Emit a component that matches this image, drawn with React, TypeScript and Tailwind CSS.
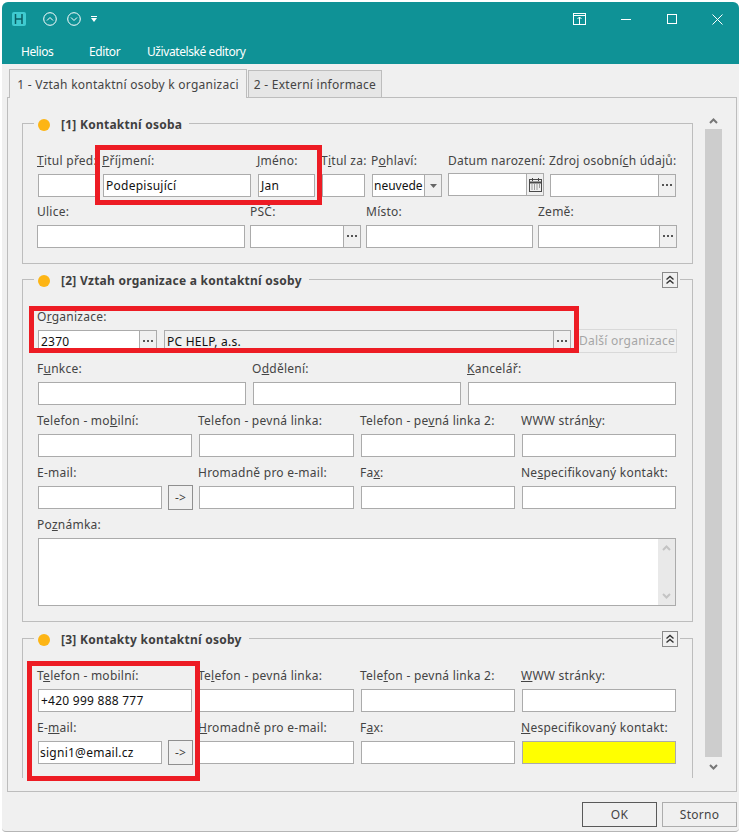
import type { ReactNode } from 'react';

function Dots() {
  return (
    <svg width="11" height="3" viewBox="0 0 11 3" className="fill-[#555555]">
      <rect x="0" y="0" width="2" height="2" />
      <rect x="4" y="0" width="2" height="2" />
      <rect x="8" y="0" width="2" height="2" />
    </svg>
  );
}

function Calendar() {
  return (
    <svg width="13" height="14" viewBox="0 0 13 14" fill="none" className="stroke-[#4a4a4a]">
      <rect x="0.5" y="1.5" width="12" height="12" />
      <path d="M0.5 4.5h12" strokeWidth="2" />
      <path d="M3.5 0v3M9.5 0v3" />
      <path d="M2.5 7h1M5 7h1M7.5 7h1M10 7h1M2.5 9h1M5 9h1M7.5 9h1M10 9h1M2.5 11h1M5 11h1M7.5 11h1" />
    </svg>
  );
}

function DoubleUp() {
  return (
    <svg width="10" height="10" viewBox="0 0 10 10" fill="none" strokeWidth="1.4" className="stroke-[#333333]">
      <path d="M1.5 4.5 5 1.5l3.5 3" />
      <path d="M1.5 8.5 5 5.5l3.5 3" />
    </svg>
  );
}

function Chevron({ down, color }: { down?: boolean; color: string }) {
  return (
    <svg width="9" height="6" viewBox="0 0 9 6" fill="none" strokeWidth="2" stroke={color}>
      <path d={down ? 'M1 1l3.5 3.5L8 1' : 'M1 5l3.5-3.5L8 5'} />
    </svg>
  );
}

function Input({ className = '', text, side, bg = 'bg-white', textClass = 'pl-[2px]' }: {
  className?: string;
  text?: string;
  side?: ReactNode;
  bg?: string;
  textClass?: string;
}) {
  return (
    <div className={`flex h-[23px] shrink-0 border border-[#ababab] ${bg} ${className}`}>
      <div className={`flex min-w-0 flex-1 items-center overflow-hidden whitespace-nowrap text-[#111111] ${textClass}`}>{text}</div>
      {side && (
        <div className="flex w-[17px] shrink-0 items-center justify-center border-l border-[#ababab] bg-[#f0f0f0]">
          {side}
        </div>
      )}
    </div>
  );
}

function Field({ w, label, flush, children }: { w: string; label: ReactNode; flush?: boolean; children?: ReactNode }) {
  return (
    <div className={`shrink-0 ${w}`}>
      <div className={`mb-[5px] mt-px h-[16px] whitespace-nowrap leading-[16px] text-[#444444] ${flush ? '' : '-ml-px'}`}>{label}</div>
      {children ?? <Input className="w-full" />}
    </div>
  );
}

function ArrowButton() {
  return (
    <div className="-mt-px flex h-[25px] w-[25px] shrink-0 items-center justify-center border border-[#8f8f8f] bg-[#f0f0f0] text-[#444444]">
      -&gt;
    </div>
  );
}

function Group({ title, height, className = '', open, collapse, children }: {
  title: string;
  height: string;
  className?: string;
  open?: boolean;
  collapse?: boolean;
  children: ReactNode;
}) {
  return (
    <div className={`relative w-[671px] border-x border-t border-[#bdbdbd] pl-[15px] pt-[28px] ${open ? '' : 'border-b'} ${height} ${className}`}>
      <div className="absolute -top-[7px] left-[11px] flex h-[16px] items-center gap-[11px] bg-[#f0f0f0] pl-[4px] pr-[7px]">
        <span className="h-[12px] w-[12px] rounded-full bg-[#fdb515]" />
        <span className="font-bold text-[#3f3f3f]">{title}</span>
      </div>
      {collapse && (
        <div className="absolute -top-[8px] right-[12px] bg-[#f0f0f0] pl-px pr-[2px]">
          <div className="flex h-[16px] w-[16px] items-center justify-center border border-[#8a8a8a]">
            <DoubleUp />
          </div>
        </div>
      )}
      {children}
    </div>
  );
}

export default function App() {
  return (
    <div className="relative h-[833px] w-[739px] overflow-hidden bg-white font-['Noto_Sans',sans-serif] text-[12px] tracking-[0.25px]">
      <div className="ml-[2px] mt-[2px] flex h-[830px] w-[737px] flex-col rounded-t-[6px] rounded-b-[4px] border-b border-[#b5b5b5] bg-[#f0f0f0]">
        {/* title bar */}
        <div className="flex h-[62px] flex-col rounded-t-[6px] bg-[#0f9296] text-white">
          <div className="flex h-[34px] items-center pl-[10px] pr-[16px]">
            <div className="flex h-[14px] w-[14px] items-center justify-center rounded-[2px] bg-[#3fcbd0]">
              <svg width="10" height="10" viewBox="0 0 10 10" fill="none" strokeWidth="1.5" className="stroke-[#0b5f63]">
                <path d="M1.5 0v10M8 0v10M1.5 5H8" />
              </svg>
            </div>
            <svg width="14" height="14" viewBox="0 0 14 14" fill="none" className="ml-[17px] stroke-white">
              <circle cx="7" cy="7" r="6.3" />
              <path d="M4 8.5l3-3 3 3" />
            </svg>
            <svg width="14" height="14" viewBox="0 0 14 14" fill="none" className="ml-[10px] stroke-white">
              <circle cx="7" cy="7" r="6.3" />
              <path d="M4 5.5l3 3 3-3" />
            </svg>
            <svg width="6" height="6" viewBox="0 0 6 6" className="ml-[10px] fill-white">
              <path d="M0 0h6v1H0zM0 2h6L3 6z" />
            </svg>
            <svg width="13" height="12" viewBox="0 0 13 12" fill="none" className="ml-auto stroke-white">
              <rect x="0.5" y="0.5" width="12" height="11" />
              <path d="M0 2.5h13M6.5 11V4M4.5 6l2-2 2 2" />
            </svg>
            <svg width="10" height="10" viewBox="0 0 10 10" fill="none" className="ml-[35px] stroke-white">
              <path d="M0 5.5h10" />
            </svg>
            <svg width="10" height="10" viewBox="0 0 10 10" fill="none" className="ml-[36px] stroke-white">
              <rect x="0.5" y="0.5" width="9" height="9" />
            </svg>
            <svg width="11" height="11" viewBox="0 0 11 11" fill="none" className="ml-[35px] stroke-white">
              <path d="M0.5 0.5l10 10M10.5 0.5l-10 10" />
            </svg>
          </div>
          <div className="flex h-[28px] items-start pl-[19px] pt-[8px] leading-[16px] tracking-[-0.42px]">
            <span className="w-[68px]">Helios</span>
            <span className="w-[58px]">Editor</span>
            <span>Uživatelské editory</span>
          </div>
        </div>

        {/* tabs */}
        <div className="flex h-[33px] items-end pl-[7px]">
          <div className="-mb-px z-10 flex h-[29px] w-[238px] items-center justify-center border-x border-t border-[#bdbdbd] bg-[#f0f0f0] pt-[2px] text-[#444444]">
            1 - Vztah kontaktní osoby k organizaci
          </div>
          <div className="ml-px flex h-[27px] w-[134px] items-center justify-center border-x border-t border-[#bdbdbd] bg-[#e6e6e6] pt-[2px] text-[#444444]">
            2 - Externí informace
          </div>
        </div>

        {/* tab page */}
        <div className="ml-[5px] flex h-[695px] w-[730px] border border-[#bdbdbd] pl-[14px]">
          <div className="pt-[25px]">
            <Group title="[1] Kontaktní osoba" height="h-[141px]">
              <div className="flex gap-[7px]">
                <Field w="w-[58px]" label={<><u>T</u>itul před:</>} />
                <Field w="w-[148px]" label={<><u>P</u>říjmení:</>}>
                  <Input className="w-full" text="Podepisující" />
                </Field>
                <Field w="w-[57px]" label={<><u>J</u>méno:</>}>
                  <Input className="w-full" text="Jan" />
                </Field>
                <Field w="w-[43px]" label={<>T<u>i</u>tul za:</>} />
                <Field w="w-[70px]" label={<>P<u>o</u>hlaví:</>}>
                  <Input
                    className="w-full tracking-normal"
                    text="neuvede"
                    textClass="pl-px"
                    side={<svg width="7" height="4" viewBox="0 0 7 4" className="fill-[#666666]"><path d="M0 0h7L3.5 4z" /></svg>}
                  />
                </Field>
                <div className="-ml-px">
                  <Field flush w="w-[96px]" label="Datum narození:">
                    <Input className="-mt-px w-full" side={<Calendar />} />
                  </Field>
                </div>
                <div className="-ml-px">
                  <Field w="w-[126px]" label={<>Zdroj osobní<u>c</u>h údajů:</>}>
                    <Input className="w-full" side={<Dots />} />
                  </Field>
                </div>
              </div>
              <div className="-ml-px mt-[6px] flex gap-[5px]">
                <Field flush w="w-[208px]" label="Ulice:" />
                <Field flush w="w-[111px]" label="PSČ:">
                  <Input className="w-full" side={<Dots />} />
                </Field>
                <Field flush w="w-[167px]" label="Místo:" />
                <Field flush w="w-[139px]" label="Země:">
                  <Input className="w-full" side={<Dots />} />
                </Field>
              </div>
            </Group>

            <Group title="[2] Vztah organizace a kontaktní osoby" height="h-[343px]" className="mt-[15px]" collapse>
              <div className="flex gap-[7px]">
                <Field w="w-[119px]" label={<>O<u>r</u>ganizace:</>}>
                  <Input className="w-full" text="2370" side={<Dots />} />
                </Field>
                <Field w="w-[407px]" label="">
                  <Input className="w-full" bg="bg-[#f0f0f0]" text="PC HELP, a.s." side={<Dots />} />
                </Field>
                <div className="-ml-px flex h-[24px] w-[100px] shrink-0 items-center justify-center self-end border border-[#d9d9d9] text-[#a6a6a6]">
                  Další organizace
                </div>
              </div>
              <div className="mt-[7px] flex gap-[7px]">
                <Field w="w-[208px]" label={<>F<u>u</u>nkce:</>} />
                <Field w="w-[208px]" label={<>O<u>d</u>dělení:</>} />
                <Field w="w-[208px]" label={<><u>K</u>ancelář:</>} />
              </div>
              <div className="mt-[7px] flex gap-[7px]">
                <Field w="w-[154px]" label={<>Telefon - mo<u>b</u>ilní:</>} />
                <Field w="w-[155px]" label="Telefon - pevná linka:" />
                <Field w="w-[154px]" label={<>Telefon - pe<u>v</u>ná linka 2:</>} />
                <Field w="w-[154px]" label={<>WWW strán<u>k</u>y:</>} />
              </div>
              <div className="mt-[7px] flex gap-[7px]">
                <Field w="w-[154px]" label="E-mail:">
                  <div className="flex items-start gap-[6px]">
                    <Input className="w-[124px]" />
                    <ArrowButton />
                  </div>
                </Field>
                <Field w="w-[155px]" label="Hromadně pro e-mail:" />
                <Field w="w-[154px]" label={<>Fa<u>x</u>:</>} />
                <Field w="w-[154px]" label={<>Ne<u>s</u>pecifikovaný kontakt:</>} />
              </div>
              <div className="mt-[7px]">
                <Field
                  w="w-[638px]"
                  label={<>Po<u>z</u>námka:</>}
                >
                  <div className="flex h-[68px] border border-[#ababab] bg-white">
                    <div className="flex-1" />
                    <div className="flex w-[17px] flex-col items-center justify-between bg-[#e9e9e9] py-[6px]">
                      <Chevron color="#c4c4c4" />
                      <Chevron down color="#c4c4c4" />
                    </div>
                  </div>
                </Field>
              </div>
            </Group>

            <Group title="[3] Kontakty kontaktní osoby" height="h-[140px]" className="mt-[16px]" open collapse>
              <div className="flex gap-[7px]">
                <Field w="w-[154px]" label={<>T<u>e</u>lefon - mobilní:</>}>
                  <Input className="w-full" text="+420 999 888 777" textClass="pl-[2px]" />
                </Field>
                <Field w="w-[155px]" label={<>Te<u>l</u>efon - pevná linka:</>} />
                <Field w="w-[154px]" label={<>Tele<u>f</u>on - pevná linka 2:</>} />
                <Field w="w-[154px]" label={<><u>W</u>WW stránky:</>} />
              </div>
              <div className="mt-[7px] flex gap-[7px]">
                <Field w="w-[154px]" label={<>E-<u>m</u>ail:</>}>
                  <div className="flex items-start gap-[6px]">
                    <Input className="w-[124px]" text="signi1@email.cz" textClass="pl-[1px]" />
                    <ArrowButton />
                  </div>
                </Field>
                <Field w="w-[155px]" label={<><u>H</u>romadně pro e-mail:</>} />
                <Field w="w-[154px]" label={<>F<u>a</u>x:</>} />
                <Field w="w-[154px]" label={<><u>N</u>especifikovaný kontakt:</>}>
                  <Input className="w-full" bg="bg-[#ffff00]" />
                </Field>
              </div>
            </Group>
          </div>

          {/* scrollbar */}
          <div className="ml-[12px] mt-[14px] flex h-[665px] w-[17px] flex-col bg-[#cdcdcd]">
            <div className="flex h-[17px] items-center justify-center bg-[#f0f0f0]">
              <Chevron color="#777777" />
            </div>
            <div className="flex-1" />
            <div className="flex h-[20px] items-center justify-center bg-[#f0f0f0]">
              <Chevron down color="#777777" />
            </div>
          </div>
        </div>

        {/* footer */}
        <div className="flex flex-1 items-start justify-end gap-[5px] pr-[2px] pt-[10px] text-[#444444]">
          <div className="flex h-[25px] w-[75px] items-center justify-center border border-[#5a5a5a]">OK</div>
          <div className="flex h-[25px] w-[75px] items-center justify-center border border-[#adadad]">Storno</div>
        </div>
      </div>

      {/* red highlight frames drawn over the form */}
      <div className="absolute left-[95px] top-[145px] h-[60px] w-[227px] border-[5px] border-[#ed1c24]" />
      <div className="absolute left-[29px] top-[306px] h-[47px] w-[550px] border-[5px] border-[#ed1c24]" />
      <div className="absolute left-[27px] top-[661px] h-[120px] w-[173px] border-[5px] border-[#ed1c24]" />
    </div>
  );
}
